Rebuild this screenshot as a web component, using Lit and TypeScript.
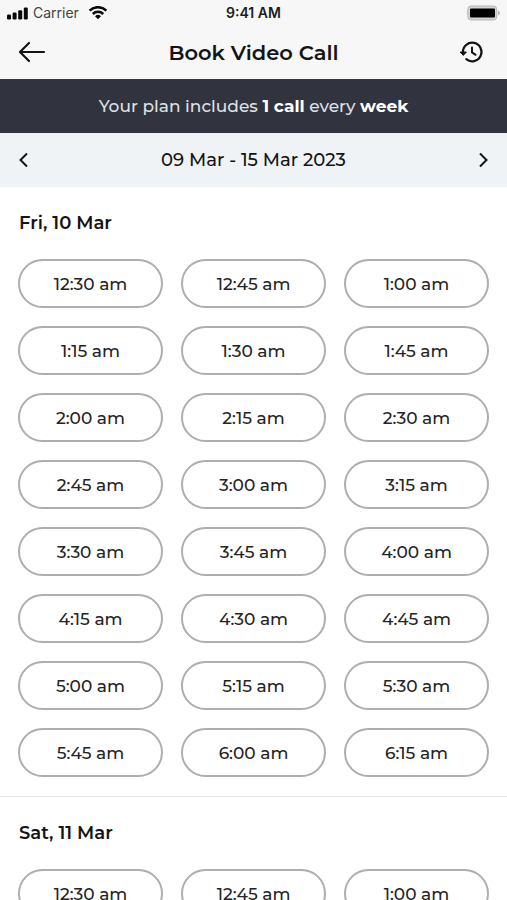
import { LitElement, html, css, svg } from "lit";
import { customElement, property } from "lit/decorators.js";

interface Day {
  label: string;
  slots: string[];
}

const days: Day[] = [
  {
    label: "Fri, 10 Mar",
    slots: [
      "12:30 am", "12:45 am", "1:00 am",
      "1:15 am", "1:30 am", "1:45 am",
      "2:00 am", "2:15 am", "2:30 am",
      "2:45 am", "3:00 am", "3:15 am",
      "3:30 am", "3:45 am", "4:00 am",
      "4:15 am", "4:30 am", "4:45 am",
      "5:00 am", "5:15 am", "5:30 am",
      "5:45 am", "6:00 am", "6:15 am",
    ],
  },
  { label: "Sat, 11 Mar", slots: ["12:30 am", "12:45 am", "1:00 am"] },
];

@customElement("status-bar")
export class StatusBar extends LitElement {
  static styles = css`
    :host {
      display: grid;
      grid-template-columns: 1fr auto 1fr;
      align-items: center;
      height: 26px;
      padding: 0 7px;
      font-family: Inter, "Liberation Sans", sans-serif;
      font-size: 14px;
      line-height: 18px;
      color: #1c1c1c;
    }
    .left {
      display: flex;
      align-items: center;
      gap: 5px;
      color: #444;
    }
    .wifi {
      margin-left: 4px;
    }
    .time {
      font-weight: 600;
    }
    .battery {
      justify-self: end;
    }
    svg {
      display: block;
    }
  `;

  render() {
    return html`
      <div class="left">
        <svg width="21" height="13" viewBox="0 0 21 13" fill="#0a0a0a" aria-hidden="true">
          <rect x="0" y="7.5" width="4" height="5" rx="1.2" />
          <rect x="5.6" y="5.5" width="4" height="7" rx="1.2" />
          <rect x="11.2" y="3.3" width="4" height="9.2" rx="1.2" />
          <rect x="16.8" y="0.5" width="4" height="12" rx="1.2" />
        </svg>
        <span>Carrier</span>
        <svg class="wifi" width="20" height="14" viewBox="0 0 20 14" aria-hidden="true">
          <g fill="none" stroke="#0a0a0a" stroke-width="2.5">
            <path d="M1.6 4.6 A12 12 0 0 1 18.4 4.6" />
            <path d="M4.8 8 A7.4 7.4 0 0 1 15.2 8" />
          </g>
          <path d="M10 13.2 L7 10.2 A4.3 4.3 0 0 1 13 10.2 Z" fill="#0a0a0a" />
        </svg>
      </div>
      <span class="time">9:41 AM</span>
      <svg class="battery" width="33" height="16" viewBox="0 0 33 16" aria-hidden="true">
        <rect x="0.8" y="1" width="29" height="14" rx="3.4" fill="#d4d4d4" stroke="#b5b5b5" />
        <rect x="3" y="3.5" width="25" height="9" rx="1" fill="#000" />
        <path d="M31 5.4 Q33 6.4 33 8 Q33 9.6 31 10.6 Z" fill="#b5b5b5" />
      </svg>
    `;
  }
}

@customElement("day-slots")
export class DaySlots extends LitElement {
  @property() label = "";
  @property({ attribute: false }) slots: string[] = [];

  static styles = css`
    :host {
      display: block;
      padding: 24px 18px 19px;
      border-bottom: 1px solid #e6e7e9;
    }
    .label {
      margin: 0 1px 24px;
      font-size: 18px;
      line-height: 24px;
      font-weight: 600;
      color: #141414;
    }
    .grid {
      display: grid;
      grid-template-columns: repeat(3, 1fr);
      gap: 18px;
    }
    .slot {
      height: 49px;
      padding: 0;
      border: 2px solid #adaeb2;
      border-radius: 25px;
      background: #fff;
      font: inherit;
      font-size: 17px;
      line-height: 24px;
      font-weight: 500;
      color: #242424;
    }
  `;

  render() {
    return html`
      <h2 class="label">${this.label}</h2>
      <div class="grid">
        ${this.slots.map((time) => html`<button class="slot" type="button">${time}</button>`)}
      </div>
    `;
  }
}

@customElement("app-root")
export class AppRoot extends LitElement {
  static styles = css`
    :host {
      display: flex;
      flex-direction: column;
      height: 100vh;
      background: #fff;
      color: #141414;
      font-family: Montserrat, Inter, sans-serif;
    }
    .top {
      flex: none;
      background: #f7f7f7;
    }
    .nav {
      display: flex;
      align-items: center;
      justify-content: space-between;
      height: 53px;
      padding: 0 18px;
    }
    .title {
      margin: 0;
      font-size: 21px;
      line-height: 28px;
      font-weight: 600;
    }
    .icon {
      display: block;
      padding: 0;
      border: 0;
      background: none;
      color: #141414;
    }
    svg {
      display: block;
    }
    .plan {
      flex: none;
      margin: 0;
      padding: 15px 18px;
      background: #31333f;
      color: #dfe0e6;
      font-size: 17px;
      line-height: 24px;
      font-weight: 500;
      text-align: center;
    }
    .plan b {
      font-weight: 700;
      color: #fff;
    }
    .week {
      flex: none;
      display: flex;
      align-items: center;
      justify-content: space-between;
      padding: 15px 18px;
      background: #eff3f6;
      font-size: 18px;
      line-height: 24px;
      font-weight: 500;
    }
    .days {
      flex: 1;
      min-height: 0;
      overflow-y: auto;
      scrollbar-width: none;
    }
  `;

  private chevron(points: string) {
    return html`<svg width="12" height="16" viewBox="0 0 12 16" fill="none" stroke="currentColor" stroke-width="2" aria-hidden="true">
      ${svg`<path d=${points} />`}
    </svg>`;
  }

  render() {
    return html`
      <header class="top">
        <status-bar></status-bar>
        <div class="nav">
          <button class="icon" type="button" aria-label="Back">
            <svg width="30" height="24" viewBox="0 0 30 24" fill="none" stroke="currentColor" stroke-width="2.2" stroke-linecap="round" stroke-linejoin="round" aria-hidden="true">
              <path d="M26 11 H2.5 M11 2 L2 11 L11 20" />
            </svg>
          </button>
          <h1 class="title">Book Video Call</h1>
          <button class="icon" type="button" aria-label="Call history">
            <svg width="30" height="26" viewBox="0 0 30 26" fill="none" aria-hidden="true">
              <path d="M3.9 12.2 A9.3 9.3 0 1 1 7.3 19.2" stroke="currentColor" stroke-width="2.2" stroke-linecap="round" />
              <path d="M1.2 12 H7.4 L4.3 15.4 Z" fill="currentColor" stroke="currentColor" stroke-linejoin="round" />
              <path d="M13 7.6 V12.4 L16.6 14.8" stroke="currentColor" stroke-width="2" stroke-linecap="round" stroke-linejoin="round" />
            </svg>
          </button>
        </div>
      </header>
      <p class="plan">Your plan includes <b>1 call</b> every <b>week</b></p>
      <div class="week">
        <button class="icon" type="button" aria-label="Previous week">${this.chevron("M9 1.5 L2.5 8 L9 14.5")}</button>
        <span>09 Mar - 15 Mar 2023</span>
        <button class="icon" type="button" aria-label="Next week">${this.chevron("M3 1.5 L9.5 8 L3 14.5")}</button>
      </div>
      <main class="days">
        ${days.map((day) => html`<day-slots .label=${day.label} .slots=${day.slots}></day-slots>`)}
      </main>
    `;
  }
}
